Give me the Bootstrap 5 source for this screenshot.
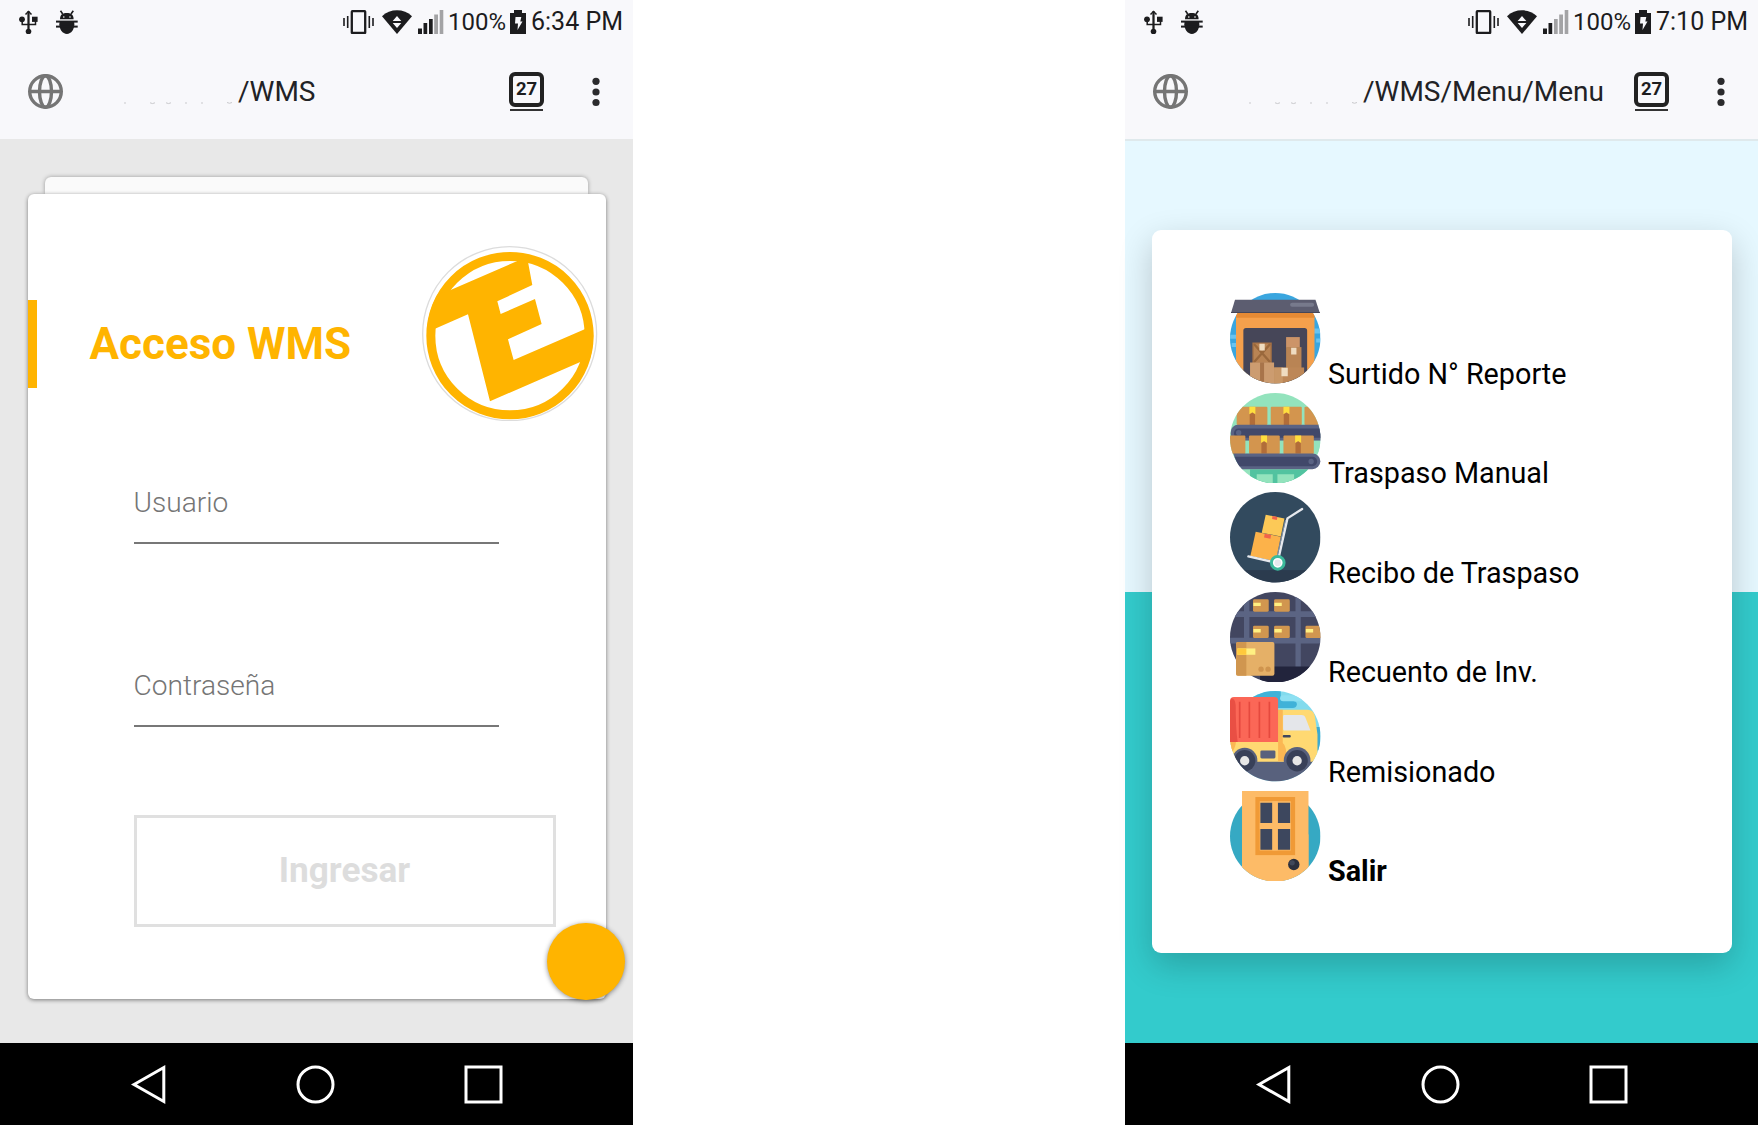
<!DOCTYPE html>
<html lang="es">
<head>
<meta charset="utf-8">
<meta name="viewport" content="width=device-width, initial-scale=1">
<title>WMS</title>
<link href="https://cdn.jsdelivr.net/npm/bootstrap@5.3.0/dist/css/bootstrap.min.css" rel="stylesheet">
<style>
body{font-family:Roboto,"Liberation Sans",sans-serif;background:#fff;width:1758px;height:1125px;overflow:hidden}
svg{display:block;flex:none}
.phone{width:633px;height:1125px}
.chrome-top{height:139px;background:#f8f8fb;color:#1c1c1e}
.statusbar{height:45px;padding:0 10px 2px 19px}
.signal{margin-left:3px}
.pct{font-size:24px;line-height:40px;margin-left:3.5px}
.clock{font-size:25px;line-height:40px;margin-left:5px}
.urlbar{height:93px;padding-left:28px}
.addr{font-size:28px;line-height:36px;color:#222225;padding-top:1px}
.smudge{margin:20px 2px 0 53px}
.dots{margin:0 33px 0 48px}
.tabs-box{width:35px;height:35px;border:4.5px solid #222;border-radius:6px;font-size:18.5px;font-weight:700;line-height:1}
.tabs-line{width:33px;height:2px;background:#333;margin-top:2.500px}
.tabs-btn{width:35px;margin-bottom:0}
.sysnav{height:82px;background:#000}
.login-bg{height:904px;background:#e8e8e8;padding:38px 27.5px 0}
.sheet-back{height:17px;margin:0 17.5px;background:#fafafa;border-radius:6px 6px 0 0;box-shadow:0 0 4px rgba(0,0,0,.34)}
.sheet{height:805px;width:578px;background:#fff;border-radius:6px;box-shadow:0 1px 4px rgba(0,0,0,.48)}
.sheet-head{height:175px;padding-top:45px}
.accent{width:9px;height:88px;background:#ffb400;margin-top:61px}
.ttl{font-size:44px;font-weight:700;color:#ffb400;line-height:52px;margin:79px 0 0 53px;width:288px}
.logo{margin:6.500px 0 0 0}
.fields{padding:99px 49px 0 106px}
.field{width:365px;height:76px;border:0;border-bottom:2px solid #777;border-radius:0;padding:0 0 6px;background:none;font-size:28.1px;font-weight:300;color:#757575}
.field::placeholder{color:#757575;opacity:1}
.field+.field{margin-top:107px}
.go{width:422px;height:112px;border:3px solid #e0e0e0;border-radius:0;color:#ddd;font-size:35.2px;font-weight:700;margin-top:88px;line-height:1}
.fab{width:77.5px;height:77.5px;background:#ffb400;right:-19px;bottom:-1px;box-shadow:0 1px 5px rgba(0,0,0,.45)}
.menu-bg{height:904px;border-top:2px solid #dfe9ec;background:linear-gradient(#e6f8ff 0 451px,#33cbcc 451px);padding:89px 26.5px 0}
.menu-card{height:723px;background:#fff;border-radius:9px;box-shadow:0 12px 34px rgba(0,0,0,.2);padding:63px 0 0 78.500px}
.menu-item{height:99.55px;font-size:28.75px;line-height:36px;color:#000;text-decoration:none;gap:7.500px}
</style>
</head>
<body>
<svg width="0" height="0" class="position-absolute">
<defs>
<clipPath id="disc"><circle cx="135.500" cy="135.500" r="135.500"/></clipPath>
<symbol id="i-left" viewBox="0 0 59 24">
 <g fill="none" stroke="#1c1c1e" stroke-width="1.500"><path d="M9.500 4V20M3.200 11v3.500H16.500V11M6.500 4.500 9.500 1.500 12.500 4.500"/></g>
 <g fill="#1c1c1e"><circle cx="3" cy="9.300" r="2.900"/><rect x="13" y="6.700" width="5.600" height="5.200"/><circle cx="9.500" cy="21.500" r="2.800"/><path d="M8.500 1h2v20h-2z"/>
 <path d="M41 9.300c0-5 3-6.300 6.800-6.300s6.800 1.300 6.800 6.300z"/><path d="M41.500.8 43.700 4M54.300.8 52 4" stroke="#1c1c1e" stroke-width="1.600"/><rect x="37" y="10.600" width="21.700" height="2"/><path d="M40.500 13.500h14.700c.3 6-3 10.400-7.300 10.400s-7.700-4.400-7.400-10.400z"/><path d="M40.500 11.500h14.700v4H40.500z"/><rect x="37" y="15.600" width="21.700" height="2"/></g>
 <circle cx="44.800" cy="7" r=".8" fill="#fff"/><circle cx="51" cy="7" r=".8" fill="#fff"/>
</symbol>
<symbol id="i-mid" viewBox="0 0 72 24">
 <rect x="8.800" y="1.200" width="13.400" height="21.800" rx=".6" fill="none" stroke="#1c1c1e" stroke-width="2.300"/>
 <path d="M1 8v8M4.700 6v12M26.300 6v12M30 8v8" stroke="#1c1c1e" stroke-width="1.600"/>
 <path d="M39 6.200C47-1.600 61-1.600 69 6.200L54 24z" fill="#1c1c1e"/><path d="M54 6l4.300 5h-8.600zM54 18l-4.300-5h8.600z" fill="#f8f8fb"/>
</symbol>
<symbol id="i-batt" viewBox="0 0 16 24"><path d="M4 0h8v3h4v21H0V3h4z" fill="#1c1c1e"/><path d="M5.500 7h5.800l-1 4.500H12.500L7.500 20l.5-6.500H5z" fill="#f8f8fb"/></symbol>
<symbol id="i-globe" viewBox="0 0 35 35"><g fill="none" stroke="#757575" stroke-width="3.400"><circle cx="17.500" cy="17.500" r="15.800"/><ellipse cx="17.500" cy="17.500" rx="6" ry="15.800"/><path d="M1 17.500h33"/></g></symbol>
<symbol id="i-dots" viewBox="0 0 8 30"><g fill="#2b2b2d"><circle cx="4" cy="4.300" r="3.600"/><circle cx="4" cy="15" r="3.600"/><circle cx="4" cy="25.500" r="3.600"/></g></symbol>
<symbol id="i-smudge" viewBox="0 0 120 6"><path d="M8 4h2M34 3.800q2.500 1.500 5 0M50 3.800q2.500 1.500 5 0M69 4h2M85 4h2M111 3.500q2.500 1.500 5 0" stroke="#c9c9cc" stroke-width="1" fill="none"/></symbol>
<symbol id="i-nav" viewBox="0 0 633 82"><g fill="none" stroke="#fff" stroke-width="3"><path d="M134 41.500 163.800 24.500V58.500z"/><circle cx="315.500" cy="41.500" r="17.500"/><rect x="466" y="24" width="35" height="35" stroke-width="3"/></g></symbol>
</defs>
</svg>

<div class="d-flex justify-content-between">
<section class="phone">
 <header class="chrome-top">
  <div class="statusbar d-flex align-items-center">
   <svg width="59" height="24"><use href="#i-left"/></svg>
   <svg class="ms-auto" width="72" height="24"><use href="#i-mid"/></svg>
   <svg class="signal" width="26" height="24"><g fill="#1c1c1e"><path d="M0 18.500h4V24H0zM5.500 13h3.700v11H5.500zM11 9h3.700v15H11z"/></g><path d="M16.200 4.500H20V24h-3.800zM21.700 0h3.600v24h-3.600z" fill="#a3a3a5"/></svg>
   <span class="pct">100%</span>
   <svg class="ms-1" width="16" height="24"><use href="#i-batt"/></svg>
   <span class="clock">6:34 PM</span>
  </div>
  <div class="urlbar d-flex align-items-center">
   <svg width="35" height="35"><use href="#i-globe"/></svg>
   <svg class="smudge" width="120" height="6"><use href="#i-smudge"/></svg>
   <span class="addr">/WMS</span>
   <div class="tabs-btn ms-auto d-flex flex-column align-items-center"><div class="tabs-box d-flex align-items-center justify-content-center">27</div><div class="tabs-line"></div></div>
   <svg class="dots" width="8" height="30"><use href="#i-dots"/></svg>
  </div>
 </header>
 <main class="login-bg">
  <div class="sheet-back"></div>
  <form class="sheet position-relative">
   <div class="sheet-head d-flex align-items-start">
    <div class="accent"></div>
    <h1 class="ttl text-nowrap">Acceso WMS</h1>
    <svg class="logo ms-auto me-2" viewBox="66 258 526 526" width="175.300" height="175.300">
     <circle cx="329" cy="521" r="261" fill="#fff" stroke="#dcdcdc" stroke-width="4"/>
     <clipPath id="lg"><circle cx="330" cy="527" r="250"/></clipPath>
     <circle cx="330" cy="527" r="237.500" fill="none" stroke="#ffb400" stroke-width="27"/>
     <path clip-path="url(#lg)" fill="#ffb400" d="M150 391 352 303 383 300 397 375 292 424 302 462 405 417 425 492 324 538 341 600 554 508 590 490V586L541 606 270 724 204 463 105 506 60 520V420z"/>
    </svg>
   </div>
   <div class="fields">
    <input class="field form-control" placeholder="Usuario">
    <input class="field form-control" type="password" placeholder="Contraseña">
    <button type="button" class="go btn">Ingresar</button>
   </div>
   <span class="fab rounded-circle position-absolute"></span>
  </form>
 </main>
 <nav class="sysnav"><svg width="633" height="82"><use href="#i-nav"/></svg></nav>
</section>

<section class="phone">
 <header class="chrome-top">
  <div class="statusbar d-flex align-items-center">
   <svg width="59" height="24"><use href="#i-left"/></svg>
   <svg class="ms-auto" width="72" height="24"><use href="#i-mid"/></svg>
   <svg class="signal" width="26" height="24"><g fill="#1c1c1e"><path d="M0 18.500h4V24H0zM5.500 13h3.700v11H5.500z"/></g><path d="M11 9h3.700v15H11zM16.200 4.500H20V24h-3.800zM21.700 0h3.600v24h-3.600z" fill="#a3a3a5"/></svg>
   <span class="pct">100%</span>
   <svg class="ms-1" width="16" height="24"><use href="#i-batt"/></svg>
   <span class="clock">7:10 PM</span>
  </div>
  <div class="urlbar d-flex align-items-center">
   <svg width="35" height="35"><use href="#i-globe"/></svg>
   <svg class="smudge" width="120" height="6"><use href="#i-smudge"/></svg>
   <span class="addr">/WMS/Menu/Menu</span>
   <div class="tabs-btn ms-auto d-flex flex-column align-items-center"><div class="tabs-box d-flex align-items-center justify-content-center">27</div><div class="tabs-line"></div></div>
   <svg class="dots" width="8" height="30"><use href="#i-dots"/></svg>
  </div>
 </header>
 <main class="menu-bg">
  <div class="menu-card d-flex flex-column">
   <a class="menu-item d-flex align-items-baseline" href="#">
    <svg width="90.500" height="90.500" viewBox="0 0 271 271">
     <g clip-path="url(#disc)"><rect width="271" height="271" fill="#3aa6df"/><path d="M0 125h20v12H0zM5 150h14v12H5zM252 106h19v15h-19zM258 136h13v12h-13z" fill="#69c3f0"/>
     <rect x="18" y="55" width="235" height="216" fill="#f5a04c"/><rect x="18" y="58" width="235" height="16" fill="#e58a35"/><path d="M40 271V113q0-8 8-8H223q8 0 8 8V271z" fill="#464658"/>
     <path d="M69 150h54v60H69z" fill="#b98454"/><path d="M71 152 121 208M121 152 71 208" stroke="#9a683c" stroke-width="7"/><path d="M69 150h54v60H69z" fill="none" stroke="#a57044" stroke-width="4"/>
     <rect x="168" y="132" width="41" height="32" fill="#cc9468"/><rect x="168" y="162" width="46" height="65" fill="#b98454"/><path d="M60 208h72v63H60z" fill="#cc9c70"/><path d="M90 208h12v63H90z" fill="#a8744a"/><path d="M132 223h90v48h-90z" fill="#bd8757"/><path d="M132 223h26v48h-26z" fill="#c89767"/><path d="M88 152h16v20H88zM183 164h16v20h-16zM154 224h19v25h-19z" fill="#efdcc1"/></g>
     <path d="M15 20H256L269 60H3z" fill="#5c5d70"/><rect x="180" y="29" width="72" height="12" rx="6" fill="#777a8c"/><path d="M3 57H269V60H3z" fill="#454658"/>
    </svg><span>Surtido N° Reporte</span></a>
   <a class="menu-item d-flex align-items-baseline" href="#">
    <svg width="90.500" height="90.500" viewBox="0 0 271 271">
     <g clip-path="url(#disc)"><rect width="271" height="271" fill="#93e3bd"/><path d="M60 229h211v42H60z" fill="#52c3a0"/><path d="M80 243h48v28H80zM142 243h50v28h-50z" fill="#93e3bd"/>
     <g fill="#d3954e"><rect x="20" y="41" width="92" height="55" rx="3"/><rect x="122" y="41" width="93" height="55" rx="3"/><rect x="223" y="41" width="60" height="55" rx="3"/></g><g fill="#ffdf3e"><path d="M58 41h18v23l-9-6-9 6zM160 41h18v23l-9-6-9 6z"/></g><path d="M59 64l8-5 8 5v32H59zM161 64l8-5 8 5v32h-16z" fill="#b26d39"/>
     <rect x="2" y="95" width="290" height="48" rx="22" fill="#5a6384"/><rect x="12" y="106" width="290" height="28" rx="13" fill="#41486a"/><circle cx="26" cy="119" r="8" fill="#5a6384"/>
     <path d="M45 143h226v38H45z" fill="#93e3bd"/><g fill="#d3954e"><rect x="-30" y="127" width="76" height="56" rx="3"/><rect x="57" y="127" width="92" height="56" rx="3"/><rect x="160" y="127" width="91" height="56" rx="3"/></g><path d="M93 127h18v23l-9-6-9 6zM195 127h18v23l-9-6-9 6z" fill="#ffdf3e"/><path d="M94 150l8-5 8 5v31H94zM196 150l8-5 8 5v31h-16z" fill="#b26d39"/></g>
     <path d="M10 181H247a23 23 0 0 1 0 47H36Q18 208 10 181z" fill="#5a6384"/><path d="M14 191H247a14 14 0 0 1 0 28H28Q20 208 14 191z" fill="#41486a"/><circle cx="243" cy="205" r="8" fill="#5a6384"/>
    </svg><span>Traspaso Manual</span></a>
   <a class="menu-item d-flex align-items-baseline" href="#">
    <svg width="90.500" height="90.500" viewBox="0 0 271 271">
     <g clip-path="url(#disc)"><rect width="271" height="271" fill="#324a5e"/><rect y="234" width="271" height="40" fill="#2b3b4e"/></g>
     <path d="M107 68 163 79 152 133 95 122z" fill="#fcc957"/><path d="M127 72l15 3-2 9-14-3z" fill="#f1634a"/><path d="M77 119 152 134 137 207 61 192z" fill="#fcb24a"/><path d="M104 125l19 4-2 11-19-4z" fill="#f1634a"/>
     <path d="M216 51 172 79 143 209M55 193 130 210" fill="none" stroke="#e6e9ee" stroke-width="7" stroke-linecap="round" stroke-linejoin="round"/><path d="M166 84 139 202" stroke="#a9b7c8" stroke-width="2"/>
     <circle cx="143" cy="212" r="19" fill="#fff" stroke="#3bb99b" stroke-width="9"/><circle cx="143" cy="212" r="10" fill="#e6e9ee"/>
    </svg><span>Recibo de Traspaso</span></a>
   <a class="menu-item d-flex align-items-baseline" href="#">
    <svg width="90.500" height="90.500" viewBox="0 0 271 271">
     <g clip-path="url(#disc)"><rect width="271" height="271" fill="#424660"/><path d="M42 0h16v150H42zM196 0h16v225h-16zM0 58h271v17H0zM0 137h271v17H0z" fill="#5b6483"/><path d="M90 223h181v48H90z" fill="#22243c"/>
     <g fill="#d1964f"><rect x="69" y="22" width="47" height="37" rx="4"/><rect x="132" y="22" width="47" height="37" rx="4"/><rect x="69" y="101" width="47" height="37" rx="4"/><rect x="132" y="101" width="47" height="37" rx="4"/><rect x="226" y="101" width="60" height="37" rx="4"/></g><path d="M70 32h22v10H70zM133 32h22v10h-22zM70 111h22v10H70zM133 111h22v10h-22zM227 111h22v10h-22z" fill="#fff082"/></g>
     <rect x="18" y="150" width="115" height="101" rx="6" fill="#e5b067"/><path d="M24 150H49V251H24q-6 0-6-6V156q0-6 6-6z" fill="#d0964f"/><path d="M22 169h54v19H22z" fill="#fff082"/><path d="M22 169h27v19H22z" fill="#ffc93c"/><circle cx="93" cy="231" r="8" fill="#cf944e"/><circle cx="114" cy="231" r="8" fill="#cf944e"/>
    </svg><span>Recuento de Inv.</span></a>
   <a class="menu-item d-flex align-items-baseline" href="#">
    <svg width="90.500" height="90.500" viewBox="0 0 271 271">
     <g clip-path="url(#disc)"><rect width="271" height="271" fill="#82dbed"/><path d="M60 0H152v12q0 16 14 18h24q12 2 10 12-2 9-12 9H60z" fill="#40b2d8"/><rect x="150" y="13" width="68" height="18" rx="9" fill="#8de0f2"/><path d="M258 108h13v70h-13z" fill="#3caad0"/><rect y="209" width="271" height="62" fill="#58617d"/>
     <path d="M144 56H232Q250 56 254 75L262 130V205L256 212H12L0 174V152H144z" fill="#ffd972"/><path d="M144 56h14v100q12 8 12 54H144z" fill="#fbb753"/><path d="M0 152h18q-2 20-14 34L0 160z" fill="#fbb753"/></g>
     <path d="M162 72h52q10 0 13 10l14 36H162q-3 0-3-5V76q0-4 3-4z" fill="#e4e6ea"/><rect x="158" y="132" width="24" height="7" rx="3" fill="#40465c"/>
     <path d="M12 18H133q11 0 11 11V153H0V30Q0 18 12 18z" fill="#fb6757"/><path d="M5 22q10 0 12 20 0 70 6 111H0V30z" fill="#e94f44"/><path d="M29 32V141M58 32V141M88 32V141M118 32V141" stroke="#e5493e" stroke-width="5"/>
     <rect x="91" y="178" width="45" height="24" rx="4" fill="#58617d"/>
     <g clip-path="url(#disc)"><circle cx="44" cy="208" r="38" fill="#58617d"/><circle cx="44" cy="209" r="32" fill="#384058"/><circle cx="44" cy="209" r="14" fill="#e6e6e6"/><circle cx="201" cy="208" r="40" fill="#58617d"/><circle cx="201" cy="209" r="32" fill="#384058"/><circle cx="201" cy="209" r="14" fill="#e6e6e6"/></g>
    </svg><span>Remisionado</span></a>
   <a class="menu-item d-flex align-items-baseline fw-bold" href="#">
    <svg width="90.500" height="90.500" viewBox="0 0 271 271">
     <g clip-path="url(#disc)"><rect width="271" height="271" fill="#36a9c3"/><rect x="36" y="130" width="199" height="141" fill="#fdbb67"/></g><path d="M36 0H235V226Q190 271 135 271 80 271 36 226z" fill="#fdbb67"/>
     <rect x="76" y="18" width="119" height="174" fill="#f09a36"/><path d="M89 31h93v147H89z" fill="#fdbb67"/><path d="M91 35h36v61H91zM143 35h37v61h-37zM91 114h36v62H91zM143 114h37v62h-37z" fill="#3d475e"/><path d="M127 31h16v147h-16zM89 96h93v18H89z" fill="#fdbb67"/><circle cx="191" cy="220" r="17" fill="#2b2f3c"/><circle cx="186" cy="215" r="8" fill="#40485a"/>
    </svg><span>Salir</span></a>
  </div>
 </main>
 <nav class="sysnav"><svg width="633" height="82"><use href="#i-nav"/></svg></nav>
</section>
</div>
<script src="https://cdn.jsdelivr.net/npm/bootstrap@5.3.0/dist/js/bootstrap.bundle.min.js"></script>
</body>
</html>
